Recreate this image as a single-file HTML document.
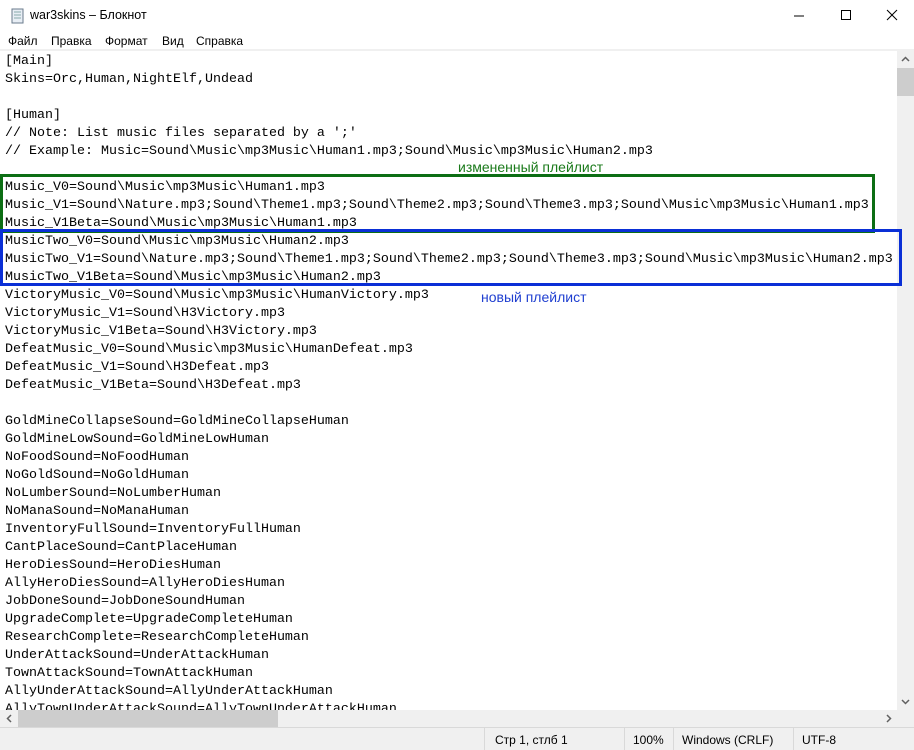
<!DOCTYPE html>
<html><head><meta charset="utf-8"><style>
body{margin:0;width:914px;height:749px;overflow:hidden;background:#fff;font-family:"Liberation Sans","Noto Sans CJK JP",sans-serif;position:relative}
.abs{position:absolute}
#title{left:0;top:0;width:914px;height:31px;background:#fff}
#title span{position:absolute;left:30px;top:8px;font-size:12.5px;color:#000}
#menu{left:0;top:31px;width:914px;height:18px;font-size:12px}
#menu span{position:absolute;top:3px}
#sep{left:0;top:49px;width:914px;height:2px;background:#f0f0f0}
#txt{left:5px;top:53px;font-family:"Liberation Mono",monospace;font-size:13.33px;line-height:18px;white-space:pre;color:#000;width:892px;height:657px;overflow:hidden}
#vs{left:897px;top:51px;width:17px;height:659px;background:#f0f0f0}
#hs{left:0;top:710px;width:897px;height:17px;background:#f0f0f0}
#corner{left:897px;top:710px;width:17px;height:17px;background:#f0f0f0}
#status{left:0;top:727px;width:914px;height:22px;background:#f0f0f0;border-top:1px solid #d9d9d9;font-size:12px}
#status span{position:absolute;top:5px}
.vl{position:absolute;top:0;width:1px;height:22px;background:#d9d9d9}
</style></head><body>
<div id="title" class="abs">
<svg class="abs" style="left:10px;top:8px" width="16" height="16"><rect x="2" y="1" width="11" height="14" fill="#e8eef5" stroke="#6a7b8c"/><path d="M4 4h7M4 7h7M4 10h7" stroke="#8aa" /></svg>
<span>war3skins – Блокнот</span>
<svg class="abs" style="left:793px;top:9px" width="14" height="14"><path d="M1 7h10" stroke="#000"/></svg>
<svg class="abs" style="left:840px;top:9px" width="14" height="14"><rect x="1.5" y="1.5" width="9" height="9" fill="none" stroke="#000"/></svg>
<svg class="abs" style="left:886px;top:9px" width="14" height="14"><path d="M1 1l10 10M11 1L1 11" stroke="#000"/></svg>
</div>
<div id="menu" class="abs"><span style="left:8px">Файл</span><span style="left:51px">Правка</span><span style="left:105px">Формат</span><span style="left:162px">Вид</span><span style="left:196px">Справка</span></div>
<div id="sep" class="abs"></div>
<div id="txt" class="abs">[Main]
Skins=Orc,Human,NightElf,Undead

[Human]
// Note: List music files separated by a ';'
// Example: Music=Sound\Music\mp3Music\Human1.mp3;Sound\Music\mp3Music\Human2.mp3

Music_V0=Sound\Music\mp3Music\Human1.mp3
Music_V1=Sound\Nature.mp3;Sound\Theme1.mp3;Sound\Theme2.mp3;Sound\Theme3.mp3;Sound\Music\mp3Music\Human1.mp3
Music_V1Beta=Sound\Music\mp3Music\Human1.mp3
MusicTwo_V0=Sound\Music\mp3Music\Human2.mp3
MusicTwo_V1=Sound\Nature.mp3;Sound\Theme1.mp3;Sound\Theme2.mp3;Sound\Theme3.mp3;Sound\Music\mp3Music\Human2.mp3
MusicTwo_V1Beta=Sound\Music\mp3Music\Human2.mp3
VictoryMusic_V0=Sound\Music\mp3Music\HumanVictory.mp3
VictoryMusic_V1=Sound\H3Victory.mp3
VictoryMusic_V1Beta=Sound\H3Victory.mp3
DefeatMusic_V0=Sound\Music\mp3Music\HumanDefeat.mp3
DefeatMusic_V1=Sound\H3Defeat.mp3
DefeatMusic_V1Beta=Sound\H3Defeat.mp3

GoldMineCollapseSound=GoldMineCollapseHuman
GoldMineLowSound=GoldMineLowHuman
NoFoodSound=NoFoodHuman
NoGoldSound=NoGoldHuman
NoLumberSound=NoLumberHuman
NoManaSound=NoManaHuman
InventoryFullSound=InventoryFullHuman
CantPlaceSound=CantPlaceHuman
HeroDiesSound=HeroDiesHuman
AllyHeroDiesSound=AllyHeroDiesHuman
JobDoneSound=JobDoneSoundHuman
UpgradeComplete=UpgradeCompleteHuman
ResearchComplete=ResearchCompleteHuman
UnderAttackSound=UnderAttackHuman
TownAttackSound=TownAttackHuman
AllyUnderAttackSound=AllyUnderAttackHuman
AllyTownUnderAttackSound=AllyTownUnderAttackHuman</div>
<div class="abs" style="left:458px;top:159px;font-size:14px;color:#1a7a1a">измененный плейлист</div>
<div class="abs" style="left:481px;top:289px;font-size:14px;color:#1f3fd0">новый плейлист</div>
<div class="abs" style="left:0;top:174px;width:869px;height:53px;border:3px solid #0c6e14"></div>
<div id="vs" class="abs"><div class="abs" style="left:0;top:17px;width:17px;height:28px;background:#cdcdcd"></div>
<svg class="abs" style="left:4px;top:5px" width="9" height="6"><path d="M1 5l3.5-3.5L8 5" stroke="#606060" fill="none" stroke-width="1.5"/></svg>
<svg class="abs" style="left:4px;top:648px" width="9" height="6"><path d="M1 1l3.5 3.5L8 1" stroke="#606060" fill="none" stroke-width="1.5"/></svg></div>
<div id="hs" class="abs"><div class="abs" style="left:18px;top:0;width:260px;height:17px;background:#cdcdcd"></div>
<svg class="abs" style="left:6px;top:4px" width="6" height="9"><path d="M5 1L1.5 4.5 5 8" stroke="#606060" fill="none" stroke-width="1.5"/></svg>
<svg class="abs" style="left:886px;top:4px" width="6" height="9"><path d="M1 1l3.5 3.5L1 8" stroke="#606060" fill="none" stroke-width="1.5"/></svg></div>
<div class="abs" style="left:0;top:229px;width:896px;height:51px;border:3px solid #0a2fd6"></div>
<div id="corner" class="abs"></div>
<div id="status" class="abs">
<div class="vl" style="left:484px"></div><span style="left:495px">Стр 1, стлб 1</span>
<div class="vl" style="left:624px"></div><span style="left:633px">100%</span>
<div class="vl" style="left:673px"></div><span style="left:682px">Windows (CRLF)</span>
<div class="vl" style="left:793px"></div><span style="left:802px">UTF-8</span>
</div>
</body></html>
